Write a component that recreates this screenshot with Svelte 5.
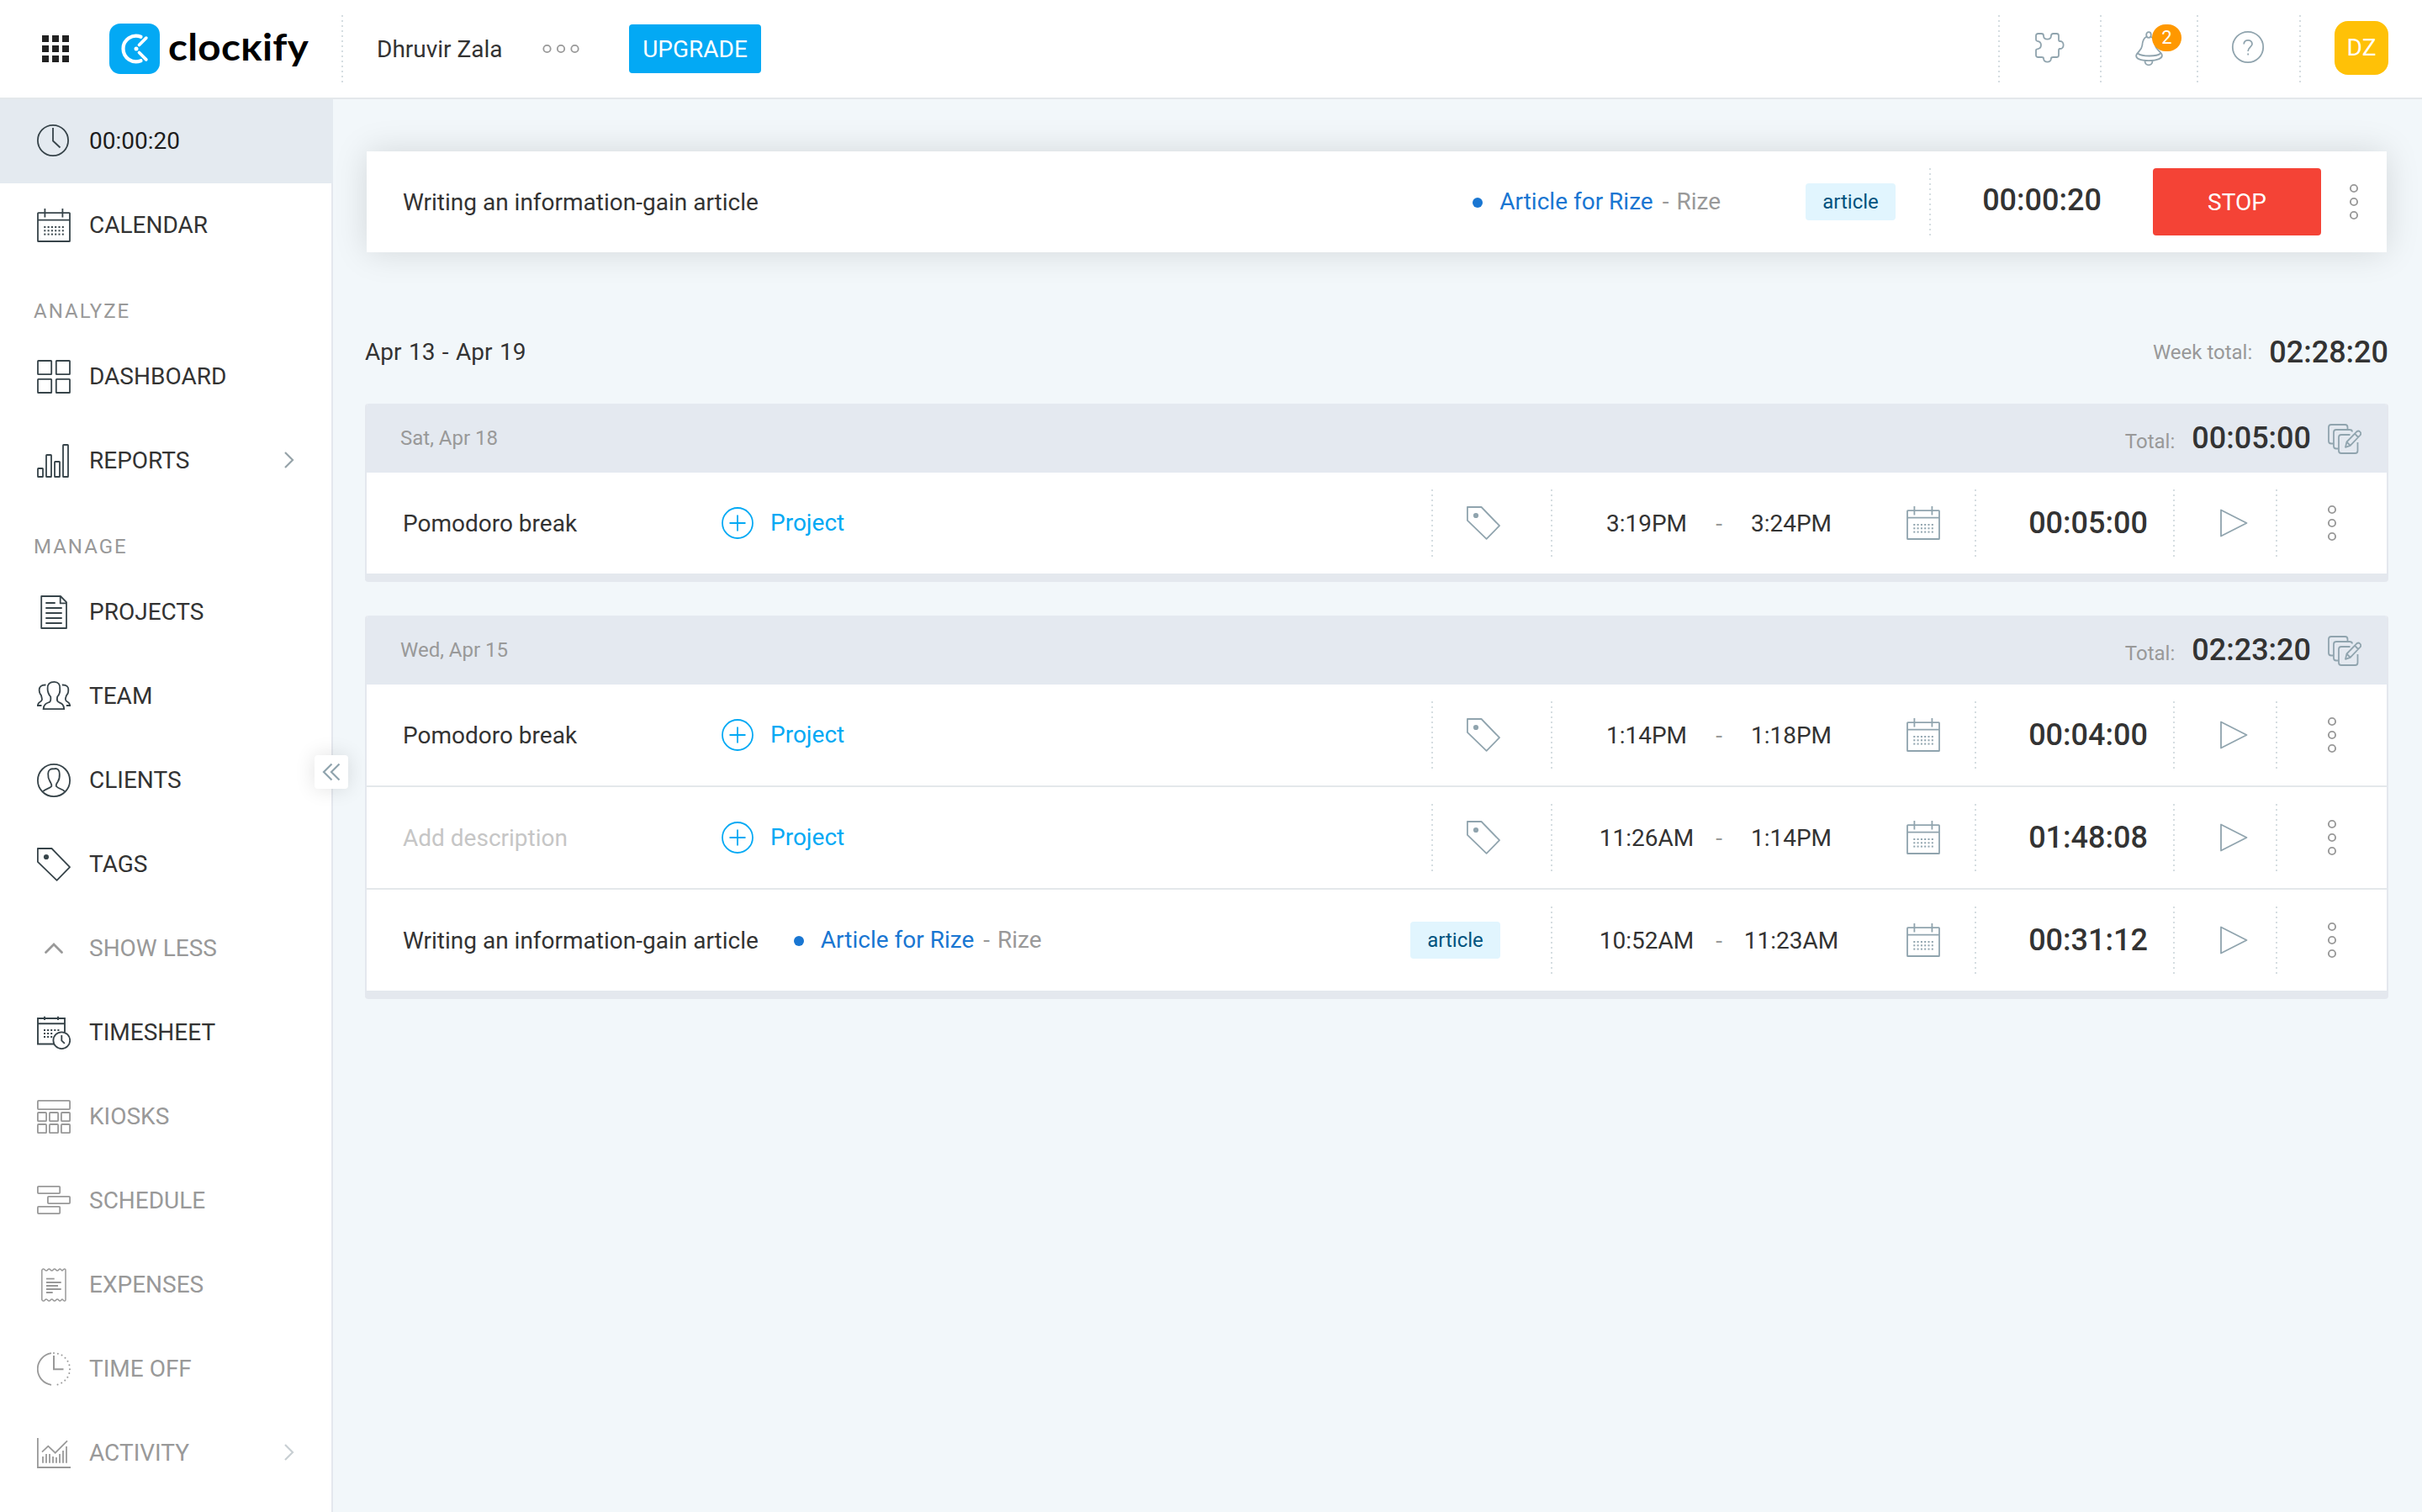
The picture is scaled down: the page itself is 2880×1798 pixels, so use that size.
<script>
  const mainLinks = [
    { label: '00:00:20', icon: 'clock', active: true },
    { label: 'CALENDAR', icon: 'calendar' },
  ];
  const analyzeLinks = [
    { label: 'DASHBOARD', icon: 'dashboard' },
    { label: 'REPORTS', icon: 'reports', arrow: true },
  ];
  const manageLinks = [
    { label: 'PROJECTS', icon: 'projects' },
    { label: 'TEAM', icon: 'team' },
    { label: 'CLIENTS', icon: 'clients' },
    { label: 'TAGS', icon: 'tag' },
    { label: 'SHOW LESS', icon: 'up', muted: true },
    { label: 'TIMESHEET', icon: 'timesheet' },
    { label: 'KIOSKS', icon: 'kiosks', muted: true },
    { label: 'SCHEDULE', icon: 'schedule', muted: true },
    { label: 'EXPENSES', icon: 'expenses', muted: true },
    { label: 'TIME OFF', icon: 'timeoff', muted: true },
    { label: 'ACTIVITY', icon: 'activity', muted: true, arrow: true },
  ];

  const running = {
    description: 'Writing an information-gain article',
    project: 'Article for Rize',
    client: 'Rize',
    tag: 'article',
    time: '00:00:20',
  };

  const days = [
    {
      date: 'Sat, Apr 18',
      total: '00:05:00',
      entries: [
        { description: 'Pomodoro break', start: '3:19PM', end: '3:24PM', duration: '00:05:00' },
      ],
    },
    {
      date: 'Wed, Apr 15',
      total: '02:23:20',
      entries: [
        { description: 'Pomodoro break', start: '1:14PM', end: '1:18PM', duration: '00:04:00' },
        { description: '', start: '11:26AM', end: '1:14PM', duration: '01:48:08' },
        {
          description: 'Writing an information-gain article',
          project: 'Article for Rize',
          client: 'Rize',
          tag: 'article',
          start: '10:52AM',
          end: '11:23AM',
          duration: '00:31:12',
        },
      ],
    },
  ];

  const calendarRows = [22, 26.3, 30.6];
  const calendarCols = [9.3, 13.6, 17.9, 22.2, 26.5, 30.8];
  const sheetRows = [17, 21, 25];
  const sheetCols = [9, 13.1, 17.2, 21.3, 25.4];
  const activityBars = [[7, 24], [11, 21], [15, 21], [19, 24], [23, 25], [27, 21], [31, 17], [35, 12]];
</script>

{#snippet icon(name)}
  <svg class="icon" width="40" height="40" viewBox="0 0 40 40" fill="none" stroke="currentColor" stroke-width="1.8">
    {#if name === 'clock'}
      <circle cx="19" cy="19" r="18.1" />
      <path d="M19 4v15.5l8.5 8" />
    {:else if name === 'calendar'}
      <rect x="1" y="5.2" width="38" height="33.8" rx="0.6" />
      <path d="M1 13.7h38M9.4 0v10.4M30.4 0v10.4" />
      {#each calendarRows as y}
        {#each calendarCols as x}
          <rect class="dot" x={x - 1} y={y - 1} width="2" height="2" />
        {/each}
      {/each}
    {:else if name === 'dashboard'}
      <rect x="1" y="1" width="16.2" height="16.2" rx="0.6" />
      <rect x="22.8" y="1" width="16.2" height="16.2" rx="0.6" />
      <rect x="1" y="22.8" width="16.2" height="16.2" rx="0.6" />
      <rect x="22.8" y="22.8" width="16.2" height="16.2" rx="0.6" />
    {:else if name === 'reports'}
      <rect x="1" y="29" width="6" height="10" rx="0.6" />
      <rect x="11" y="13" width="6" height="26" rx="0.6" />
      <rect x="21" y="21" width="6" height="18" rx="0.6" />
      <rect x="31" y="1" width="6" height="38" rx="0.6" />
    {:else if name === 'projects'}
      <path d="M5.2 1h22.8L35 8.2V39H5.2zM27.7 1v8.4H35" stroke-linejoin="round" />
      <path d="M10.3 9h11.4M10.3 15h19.4M10.3 21h19.4M10.3 27h19.4M10.3 33h19.4" />
    {:else if name === 'team'}
      <path d="M20.5 2.8C15 2.8 12.4 6 12.6 10.5C12.4 14.5 14 18 16.2 20.5C16.6 24 16.8 25.5 15 26.8C11.5 28.3 8 29 7.6 35.2H32.2C31.8 29 28.5 28.3 25.5 26.8C23.4 25.5 23.6 24 24.2 20.5C26.6 18 27.7 14.5 27.2 10.5C27.4 6 25.5 2.8 20.5 2.8z" />
      <path d="M10.5 6.5C5 6.2 2.4 9 2.7 13C2.6 16 4 17.5 5 19C6 23 7 25 3.5 26.8C1.7 27.8 1 29 .8 31H5.5" />
      <path d="M29.8 6.5C35.3 6.2 37.900 9 37.200 13C37.700 16 36.300 17.500 35 19C33.500 23 33 25 36.500 26.800C38.300 27.800 39 29 39.200 31H34.800" />
    {:else if name === 'clients'}
      <circle cx="20" cy="20" r="19.1" />
      <path d="M7.3 33C9 30.500 15 29.800 17.300 27C18 25 17 24 15.300 21C13.400 18 13 15 13.200 12C13.400 7.500 16 6 20 6.300C24.800 5 27 8.500 26.800 12.500C27 16 26.500 19 24.800 21.500C23 24 22.200 25 22.900 27C25.500 30 31 30.500 32.700 33" />
    {:else if name === 'tag'}
      <path d="M.9 1h16.6L39 23.2 23.6 38.900.9 16.900z" stroke-linejoin="round" />
      <circle class="dot" cx="11" cy="11" r="3.1" />
    {:else if name === 'up'}
      <path d="M10.5 24.5L20 15l9.5 9.5" stroke-width="2.8" stroke-linecap="round" />
    {:else if name === 'timesheet'}
      <path d="M33 19.5V3H1v30.500h20M1 9.300h32.500M9 .8v4.200M25 .8v4.200" stroke-width="1.9" />
      {#each sheetRows as y}
        {#each sheetCols as x}
          {#if x < 20 || y === 17}
            <rect class="dot" x={x - 1} y={y - 1} width="2" height="2" />
          {/if}
        {/each}
      {/each}
      <circle cx="29.3" cy="29.2" r="9.9" />
      <path d="M29.3 23v6.300l3.600 3.600" />
    {:else if name === 'kiosks'}
      <rect x=".9" y=".9" width="38.2" height="10.2" rx="1" />
      {#each [15, 29] as y}
        {#each [0.9, 14.9, 28.9] as x}
          <rect {x} {y} width="10.2" height="10.2" rx="1" />
        {/each}
      {/each}
    {:else if name === 'schedule'}
      <rect x=".9" y="2.9" width="26.3" height="8.2" rx="1" />
      <rect x="12.9" y="14.9" width="26.2" height="8.2" rx="1" />
      <rect x=".9" y="26.9" width="26.3" height="8.2" rx="1" />
    {:else if name === 'expenses'}
      <path d="M5.8 37.5V2.5C6.5.5 8.5.5 9.5 2.2C10.5 3.4 11.7 3.4 12.7 2C13.7.7 15 .7 16 2C17 3.4 18.2 3.4 19.2 2C20.2.7 21.5.7 22.5 2C23.5 3.4 24.8 3.4 25.8 2C26.8.7 28 .7 29 2.2C30 3.4 30.5 3 31.5 1.5C33 .3 34 1.2 34 2.5V37.5C34 38.8 33 39.7 31.5 38.5C30.5 37 30 36.600 29 37.8C28 39.300 26.800 39.300 25.800 38C24.800 36.600 23.500 36.600 22.500 38C21.500 39.300 20.200 39.300 19.200 38C18.200 36.600 17 36.600 16 38C15 39.300 13.700 39.300 12.700 38C11.700 36.600 10.500 36.600 9.500 37.800C8.500 39.500 6.500 39.500 5.800 37.500z" stroke-width="1.5" />
      <path d="M11 12.7h9.7M11 17h17.7M11 21h14M11 25h17.7M11 29h7.7" />
    {:else if name === 'timeoff'}
      <path d="M17 1.2A19 19 0 0 0 17 38.8" />
      <path d="M20 1A19 19 0 0 1 20 39" stroke-width="2" stroke-linecap="round" stroke-dasharray="0 4.97" />
      <path d="M20 4v16.2h11.5" stroke-width="2" />
    {:else if name === 'activity'}
      <path d="M.9 2v35H40M6 18.7l7.3-7 8.4 8L36 5.3" />
      {#each activityBars as [x, y]}
        <path d="M{x} {y}V31.7" />
      {/each}
    {/if}
  </svg>
{/snippet}

{#snippet navItem(item)}
  <a class="nav-item" class:active={item.active} class:muted={item.muted} href="#top">
    {@render icon(item.icon)}
    <span>{item.label}</span>
    {#if item.arrow}
      <svg class="arrow" width="12" height="20" viewBox="0 0 12 20" fill="none" stroke="currentColor" stroke-width="2.2">
        <path d="M1 1l9 9-9 9" />
      </svg>
    {/if}
  </a>
{/snippet}

{#snippet dots()}
  <svg width="12" height="44" viewBox="0 0 12 44" fill="none" stroke="#999" stroke-width="1.9">
    <circle cx="6" cy="6" r="4.1" />
    <circle cx="6" cy="22" r="4.1" />
    <circle cx="6" cy="38" r="4.1" />
  </svg>
{/snippet}

{#snippet projectName(entry)}
  <div class="project">
    <span class="bullet"></span>
    <span class="project-name">{entry.project}</span>
    <span class="dash">-</span>
    <span class="client">{entry.client}</span>
  </div>
{/snippet}

<div class="page" id="top">
  <header>
    <svg class="apps" width="32" height="32" viewBox="0 0 32 32" fill="#222">
      {#each [0, 12, 24] as y}
        {#each [0, 12, 24] as x}
          <rect {x} {y} width="8" height="8" />
        {/each}
      {/each}
    </svg>
    <div class="logo">
      <svg width="60" height="60" viewBox="0 0 60 60" fill="none">
        <rect width="60" height="60" rx="13" fill="#03a9f4" />
        <path d="M37.5 15.8A15.3 15.3 0 1 0 37.5 44.2" stroke="#fff" stroke-width="4.2" stroke-linecap="round" />
        <path d="M35.5 25.5l8.3-8.3M35.5 34.5l8.3 8.3" stroke="#fff" stroke-width="3.8" stroke-linecap="round" />
        <circle cx="32" cy="30" r="2.5" fill="#fff" />
      </svg>
      <span class="wordmark">cloc<span class="short-k">k</span>ify</span>
    </div>
    <span class="divider"></span>
    <span class="workspace">Dhruvir Zala</span>
    <svg class="more" width="44" height="12" viewBox="0 0 44 12" fill="none" stroke="#999" stroke-width="1.8">
      <circle cx="5.5" cy="6" r="4.2" />
      <circle cx="22" cy="6" r="4.2" />
      <circle cx="38.5" cy="6" r="4.2" />
    </svg>
    <button class="upgrade">UPGRADE</button>

    <div class="tools">
      <span class="divider"></span>
      <div class="tool puzzle">
        <svg width="36" height="36" viewBox="0 0 36 36" fill="none" stroke="#90a4ae" stroke-width="1.8" stroke-linejoin="round">
          <path d="M1 3.5Q1 1 3.5 1H7.5Q10 1 10 3.5C10.2 9 18.8 9 19 3.5Q19 1 21.5 1H25.5Q28 1 28 3.5V8Q28 10.2 29.5 10C35 9.5 35 19.5 29.5 19Q28 18.7 28 21V26.5Q28 29 25.5 29H21.5Q19 29 19 30.5C18.5 36 10.5 36 10 30.5Q10 29 7.5 29H3.5Q1 29 1 26.5V21Q1 19.3 2.5 19.3C8.5 18.5 8.5 10.5 2.5 9.8Q1 9.5 1 8z" />
        </svg>
      </div>
      <span class="divider"></span>
      <div class="tool bell">
        <svg width="34" height="42" viewBox="0 0 34 42" fill="none" stroke="#90a4ae" stroke-width="1.8">
          <ellipse cx="16" cy="4.5" rx="2.8" ry="3.3" />
          <path d="M13.3 6.8C9 9 8.6 13 8.3 17C7.8 22 4 23.5 1.5 28C-.5 33 7 35 16 35.2C26 35 33.5 32.5 31.5 27.5C29 23 24.5 22 23.8 17C23.5 13 23 9 18.7 6.8" />
          <path d="M3 26.5C8 30.5 26 30.5 30 26.5M11.5 35.5C11.5 42 20.5 42 20.5 35.5" />
        </svg>
        <span class="badge">2</span>
      </div>
      <span class="divider"></span>
      <div class="tool help">
        <svg width="40" height="40" viewBox="0 0 40 40" fill="none" stroke="#90a4ae" stroke-width="1.8">
          <circle cx="20" cy="20" r="18.2" />
          <path d="M15.2 16.5C15.2 10.3 25 10.3 25 16.2C25 20 20.2 20 20.2 25" />
          <path d="M20.2 27.5v2" />
        </svg>
      </div>
      <span class="divider"></span>
      <div class="avatar">DZ</div>
    </div>
  </header>

  <div class="body">
    <nav>
      {#each mainLinks as item}
        {@render navItem(item)}
      {/each}
      <div class="nav-title">ANALYZE</div>
      {#each analyzeLinks as item}
        {@render navItem(item)}
      {/each}
      <div class="nav-title">MANAGE</div>
      {#each manageLinks as item}
        {@render navItem(item)}
      {/each}
      <button class="collapse" aria-label="Collapse sidebar">
        <svg width="22" height="22" viewBox="0 0 22 22" fill="none" stroke="#90a4ae" stroke-width="2.2">
          <path d="M11.5 1.5L2 11l9.5 9.5M20.5 1.5L11 11l9.5 9.5" />
        </svg>
      </button>
    </nav>

    <main>
      <section class="timer">
        <span class="description">{running.description}</span>
        {@render projectName(running)}
        <span class="tag">{running.tag}</span>
        <span class="divider"></span>
        <span class="clock">{running.time}</span>
        <button class="stop">STOP</button>
        <div class="timer-menu">{@render dots()}</div>
      </section>

      <div class="week">
        <span class="week-range">Apr 13 - Apr 19</span>
        <div class="week-total">
          <span class="label">Week total:</span>
          <span class="value">02:28:20</span>
        </div>
      </div>

      {#each days as day}
        <section class="day">
          <div class="day-header">
            <span class="label">{day.date}</span>
            <div class="day-total">
              <span class="label">Total:</span>
              <span class="value">{day.total}</span>
            </div>
            <svg width="40" height="36" viewBox="0 0 40 36" fill="none" stroke="#90a4ae" stroke-width="1.8">
              <path d="M6.5 23.5H4Q1 23.5 1 20.5V4Q1 1 4 1H20.5Q23.5 1 23.5 4V6.5" />
              <path d="M12.5 29.5H10Q7 29.5 7 26.5V10Q7 7 10 7H26Q29 7 29 9.5" />
              <path d="M26.5 13H16Q13 13 13 16V32Q13 35 16 35H32.500Q35.500 35 35.500 32V22" />
              <path d="M21 27.8l1.500-6.300L34.300 9.300Q36.500 7.500 38.300 9.500T38.500 13.500L26.700 25.800zM22.500 21.500l4.200 4.300M32 11.700l4.200 4.300" stroke-linejoin="round" />
            </svg>
          </div>
          {#each day.entries as entry}
            <div class="entry">
              <span class="description" class:empty={!entry.description}>
                {entry.description || 'Add description'}
              </span>
              {#if entry.project}
                {@render projectName(entry)}
              {:else}
                <div class="add-project">
                  <svg width="38" height="38" viewBox="0 0 38 38" fill="none" stroke="#03a9f4" stroke-width="1.8">
                    <circle cx="19" cy="19" r="18" />
                    <path d="M19 9.5v19M9.5 19h19" />
                  </svg>
                  <span>Project</span>
                </div>
              {/if}
              {#if entry.tag}
                <span class="tag">{entry.tag}</span>
              {:else}
                <span class="divider"></span>
                <div class="tag-cell">{@render icon('tag')}</div>
              {/if}
              <span class="divider"></span>
              <div class="range">
                <span class="time">{entry.start}</span>
                <span class="range-dash">-</span>
                <span class="time">{entry.end}</span>
                <div class="date">{@render icon('calendar')}</div>
              </div>
              <span class="divider"></span>
              <span class="duration">{entry.duration}</span>
              <span class="divider"></span>
              <div class="play">
                <svg width="34" height="34" viewBox="0 0 34 34" fill="none" stroke="#90a4ae" stroke-width="1.8" stroke-linejoin="round">
                  <path d="M2 1.5v31L32.5 17z" />
                </svg>
              </div>
              <span class="divider"></span>
              <div class="menu">{@render dots()}</div>
            </div>
          {/each}
        </section>
      {/each}
    </main>
  </div>
</div>

<style>
  :global(body) {
    background: #f2f7fa;
  }

  .page {
    display: flex;
    flex-direction: column;
    height: 1798px;
    overflow: hidden;
    font-family: Roboto, "Liberation Sans", sans-serif;
    font-size: 28px;
    color: #333;
    white-space: nowrap;
  }

  .page * {
    box-sizing: border-box;
  }

  svg {
    display: block;
    flex: none;
  }

  button {
    border: none;
    font: inherit;
    padding: 0;
  }

  .divider {
    flex: none;
    width: 2px;
    height: 80px;
    background: repeating-linear-gradient(#d5dde1 0 2px, transparent 2px 6px);
  }

  .dot {
    fill: currentColor;
    stroke: none;
  }

  header {
    display: flex;
    align-items: center;
    height: 118px;
    flex: none;
    padding: 0 40px 0 50px;
    background: #fff;
    border-bottom: 2px solid #e4e8eb;
  }

  .logo {
    display: flex;
    align-items: center;
    gap: 10px;
    width: 276px;
    margin-left: 48px;
  }

  .wordmark {
    font-family: Lato, sans-serif;
    font-weight: 700;
    font-size: 44px;
    line-height: 60px;
    letter-spacing: 0.3px;
    color: #000;
    margin-bottom: 6px;
    transform: scaleX(1.08);
    transform-origin: left;
  }

  .short-k {
    display: inline-block;
    clip-path: inset(21px 0 0 0);
  }

  .workspace {
    margin-left: 40px;
    width: 197px;
  }

  .more {
    margin-right: 59px;
  }

  .upgrade {
    width: 157px;
    height: 58px;
    border-radius: 4px;
    background: #03a9f4;
    color: #fff;
  }

  .tools {
    display: flex;
    align-items: center;
    margin-left: auto;
  }

  .tool {
    position: relative;
    display: flex;
    justify-content: center;
    align-items: center;
  }

  .puzzle {
    width: 119px;
    padding-bottom: 3px;
  }

  .bell {
    width: 113px;
    padding-left: 1px;
  }

  .badge {
    position: absolute;
    left: 60px;
    top: -8px;
    width: 35px;
    height: 32px;
    border-radius: 17px;
    background: #ff9800;
    color: #fff;
    font-size: 22px;
    line-height: 32px;
    text-align: center;
  }

  .help {
    width: 120px;
    padding: 0 2px 4px 0;
  }

  .avatar {
    width: 64px;
    height: 64px;
    margin: 0 0 2px 40px;
    border-radius: 16px;
    background: #ffc107;
    color: #fff;
    line-height: 64px;
    text-align: center;
  }

  .body {
    display: flex;
    flex: 1;
    min-height: 0;
  }

  nav {
    position: relative;
    flex: none;
    width: 396px;
    background: #fff;
    border-right: 2px solid #e4e8ee;
  }

  .nav-item {
    display: flex;
    align-items: center;
    height: 100px;
    padding-left: 44px;
    color: #333;
    text-decoration: none;
  }

  .nav-item .icon {
    margin-right: 22px;
    color: #37444a;
  }

  .nav-item span {
    padding-bottom: 1px;
  }

  .nav-item.active {
    width: 396px;
    background: #e4eaf0;
    color: #1d1d1d;
  }

  .nav-item.muted,
  .nav-item.muted .icon {
    color: #999;
  }

  .arrow {
    margin: 0 44px 2px auto;
    color: #96a3a9;
  }

  .muted .arrow {
    color: #c8cfd3;
  }

  .nav-title {
    height: 80px;
    padding: 0 0 0 40px;
    font-size: 24px;
    line-height: 104px;
    letter-spacing: 2px;
    color: #999;
  }

  .collapse {
    position: absolute;
    left: 374px;
    top: 780px;
    display: flex;
    align-items: center;
    justify-content: center;
    width: 40px;
    height: 40px;
    border-radius: 4px;
    background: #fff;
    box-shadow: 0 0 24px rgba(0, 0, 0, 0.12);
  }

  main {
    flex: 1;
    padding: 62px 40px 0 38px;
  }

  .timer {
    display: flex;
    align-items: center;
    height: 120px;
    margin: 0 2px;
    padding-left: 43px;
    background: #fff;
    box-shadow: 0 0 40px rgba(0, 0, 0, 0.13);
  }

  .timer .description {
    flex: 1;
  }

  .project {
    display: flex;
    align-items: center;
    padding-bottom: 2px;
    color: #999;
  }

  .bullet {
    width: 12px;
    height: 12px;
    margin: 4px 20px 0 0;
    border-radius: 50%;
    background: #1976d2;
  }

  .project-name {
    color: #1976d2;
  }

  .dash {
    margin: 0 9px 0 11px;
  }

  .timer .project {
    margin-right: 101px;
  }

  .tag {
    width: 107px;
    height: 44px;
    border-radius: 4px;
    background: #e1f5fe;
    color: #01537e;
    font-size: 24px;
    line-height: 44px;
    text-align: center;
  }

  .timer .tag {
    margin-right: 40px;
  }

  .clock {
    width: 264px;
    padding-bottom: 5px;
    font-size: 36px;
    font-weight: 500;
    text-align: center;
  }

  .stop {
    width: 200px;
    height: 80px;
    border-radius: 4px;
    background: #f44336;
    color: #fff;
  }

  .timer-menu {
    display: flex;
    justify-content: center;
    width: 78px;
  }

  .week {
    display: flex;
    align-items: center;
    justify-content: space-between;
    height: 60px;
    margin: 89px 0 31px;
  }

  .week-range {
    word-spacing: 1.5px;
    padding-bottom: 2px;
  }

  .week-total {
    display: flex;
    align-items: center;
    gap: 20px;
  }

  .label {
    font-size: 24px;
    color: #999;
  }

  .value {
    font-size: 36px;
    font-weight: 500;
  }

  .day {
    margin-bottom: 40px;
    border: solid #e4e8ee;
    border-width: 0 2px 10px;
    border-radius: 4px;
    background: #fff;
    overflow: hidden;
  }

  .day-header {
    display: flex;
    align-items: center;
    height: 82px;
    margin: 0 -2px;
    padding: 0 32px 0 42px;
    background: #e4e9f0;
  }

  .day-header svg {
    margin-top: 2px;
  }

  .day-total {
    display: flex;
    align-items: baseline;
    gap: 20px;
    margin: 0 20px 0 auto;
  }

  .entry {
    display: flex;
    align-items: center;
    height: 120px;
    padding-left: 43px;
  }

  .entry + .entry {
    height: 122px;
    border-top: 2px solid #e4e8eb;
  }

  .entry .description {
    min-width: 337px;
    margin-right: 42px;
  }

  .empty {
    color: #c6c6c6;
  }

  .entry .project,
  .add-project {
    margin-right: auto;
  }

  .add-project {
    display: flex;
    align-items: center;
    gap: 20px;
    color: #03a9f4;
  }

  .add-project span {
    padding-bottom: 2px;
  }

  .entry .tag {
    margin-right: 60px;
  }

  .tag-cell {
    width: 140px;
    padding-left: 40px;
    color: #90a4ae;
  }

  .range {
    display: flex;
    align-items: center;
    width: 502px;
    padding-left: 32px;
  }

  .time {
    width: 160px;
    text-align: center;
  }

  .range-dash {
    width: 12px;
    text-align: center;
    color: #999;
  }

  .date {
    margin-left: 57px;
    color: #90a4ae;
  }

  .duration {
    width: 234px;
    padding-left: 32px;
    font-size: 36px;
    font-weight: 500;
    text-align: center;
  }

  .play {
    display: flex;
    justify-content: center;
    width: 120px;
    padding-left: 20px;
  }

  .menu {
    display: flex;
    justify-content: center;
    width: 130px;
  }
</style>
